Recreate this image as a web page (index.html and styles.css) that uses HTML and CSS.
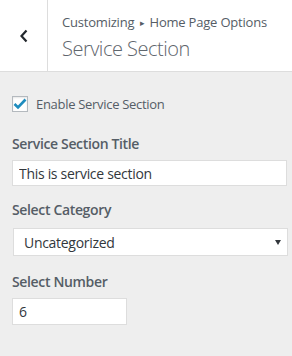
FILE: index.html
```html
<!DOCTYPE html>
<html lang="en">
<head>
  <meta charset="UTF-8">
  <title>Service Section</title>
  <link rel="stylesheet" href="styles.css">
</head>
<body>
  <div class="section-header">
    <button class="back-btn" type="button" aria-label="Back">
      <svg width="10" height="14" viewBox="0 0 10 14"><path d="M7.5 1.5 L2.5 7 L7.5 12.5" fill="none" stroke="#23282d" stroke-width="2.2"/></svg>
    </button>
    <div class="section-title">
      <div class="crumbs">Customizing <span class="sep">&#9656;</span> Home Page Options</div>
      <h3>Service Section</h3>
    </div>
  </div>

  <div class="controls">
    <label class="check-row">
      <span class="checkbox">
        <svg width="14" height="12" viewBox="0 0 14 12"><path d="M1.5 6 L5 9.5 L12.5 1.5" fill="none" stroke="#1e8cbe" stroke-width="2.6"/></svg>
      </span>
      Enable Service Section
    </label>

    <div class="control first">
      <label class="control-label" for="title">Service Section Title</label>
      <input class="text-input" type="text" id="title" value="This is service section">
    </div>

    <div class="control cat">
      <label class="control-label" for="cat">Select Category</label>
      <div class="select-wrap">
        <select id="cat">
          <option>Uncategorized</option>
        </select>
      </div>
    </div>

    <div class="control num">
      <label class="control-label" for="num">Select Number</label>
      <input class="text-input small" type="text" id="num" value="6">
    </div>
  </div>
</body>
</html>
```

FILE: styles.css
```css
body {
  margin: 0;
  background: #eee;
  font-family: "Open Sans", sans-serif;
  color: #555d66;
  font-size: 13px;
  letter-spacing: -0.3px;
}
.section-header {
  display: flex;
  height: 71px;
  background: #fff;
  border-bottom: 1px solid #ddd;
}
.back-btn {
  width: 48px;
  padding: 0;
  border: none;
  border-right: 1px solid #ddd;
  background: #fff;
  display: flex;
  align-items: center;
  justify-content: center;
}
.section-title {
  padding: 12px 0 0 14px;
}
.crumbs {
  font-size: 13px;
  line-height: 20px;
  letter-spacing: -0.2px;
}
.crumbs .sep {
  font-size: 9px;
  vertical-align: 1px;
  margin: 0 2px;
}
.section-title h3 {
  margin: 3px 0 0;
  font-size: 20px;
  font-weight: 300;
  line-height: 26px;
  letter-spacing: -0.5px;
  color: #5f666d;
}
.controls {
  padding: 22px 5px 0 12px;
}
.check-row {
  display: flex;
  align-items: center;
  height: 20px;
  gap: 8px;
}
.checkbox {
  width: 14px;
  height: 14px;
  border: 1px solid #b4b9be;
  background: #fff;
  box-shadow: inset 0 1px 2px rgba(0,0,0,0.1);
  display: flex;
  align-items: center;
  justify-content: center;
}
.control-label {
  display: block;
  font-size: 14px;
  font-weight: 600;
  line-height: 20px;
  letter-spacing: -0.35px;
}
.control.first { margin-top: 20px; }
.control.cat { margin-top: 14px; }
.control.num { margin-top: 16px; }
.text-input, select {
  display: block;
  box-sizing: border-box;
  width: 275px;
  margin: 6px 0 0;
  border: 1px solid #ddd;
  background: #fff;
  font-family: "Open Sans", sans-serif;
  font-size: 14px;
  letter-spacing: -0.3px;
  color: #32373c;
  outline: none;
}
.text-input {
  height: 26px;
  padding: 0 6px;
}
.text-input.small {
  width: 115px;
  height: 27px;
}
.select-wrap {
  position: relative;
  margin: 8px 0 0 1px;
}
.select-wrap select {
  margin: 0;
  height: 28px;
  padding: 0 10px;
  appearance: none;
  border-radius: 0;
}
.select-wrap::after {
  content: "";
  position: absolute;
  left: 262px;
  top: 12px;
  border-left: 3px solid transparent;
  border-right: 3px solid transparent;
  border-top: 5px solid #32373c;
}
```
